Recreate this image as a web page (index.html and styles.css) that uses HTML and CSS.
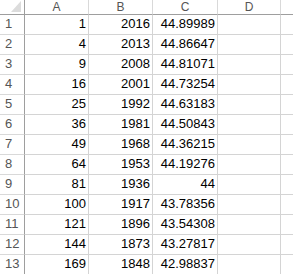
FILE: index.html
```
<!DOCTYPE html>
<html>
<head>
<meta charset="utf-8">
<link rel="stylesheet" href="styles.css">
</head>
<body>
<div class="sheet">
  <div class="corner"><span class="tri"></span></div>
  <div class="colh">A</div><div class="colh">B</div><div class="colh">C</div><div class="colh">D</div><div class="colh last"></div>

  <div class="rowh">1</div><div class="cell">1</div><div class="cell">2016</div><div class="cell">44.89989</div><div class="cell"></div><div class="cell last"></div>
  <div class="rowh">2</div><div class="cell">4</div><div class="cell">2013</div><div class="cell">44.86647</div><div class="cell"></div><div class="cell last"></div>
  <div class="rowh">3</div><div class="cell">9</div><div class="cell">2008</div><div class="cell">44.81071</div><div class="cell"></div><div class="cell last"></div>
  <div class="rowh">4</div><div class="cell">16</div><div class="cell">2001</div><div class="cell">44.73254</div><div class="cell"></div><div class="cell last"></div>
  <div class="rowh">5</div><div class="cell">25</div><div class="cell">1992</div><div class="cell">44.63183</div><div class="cell"></div><div class="cell last"></div>
  <div class="rowh">6</div><div class="cell">36</div><div class="cell">1981</div><div class="cell">44.50843</div><div class="cell"></div><div class="cell last"></div>
  <div class="rowh">7</div><div class="cell">49</div><div class="cell">1968</div><div class="cell">44.36215</div><div class="cell"></div><div class="cell last"></div>
  <div class="rowh">8</div><div class="cell">64</div><div class="cell">1953</div><div class="cell">44.19276</div><div class="cell"></div><div class="cell last"></div>
  <div class="rowh">9</div><div class="cell">81</div><div class="cell">1936</div><div class="cell">44</div><div class="cell"></div><div class="cell last"></div>
  <div class="rowh">10</div><div class="cell">100</div><div class="cell">1917</div><div class="cell">43.78356</div><div class="cell"></div><div class="cell last"></div>
  <div class="rowh">11</div><div class="cell">121</div><div class="cell">1896</div><div class="cell">43.54308</div><div class="cell"></div><div class="cell last"></div>
  <div class="rowh">12</div><div class="cell">144</div><div class="cell">1873</div><div class="cell">43.27817</div><div class="cell"></div><div class="cell last"></div>
  <div class="rowh">13</div><div class="cell">169</div><div class="cell">1848</div><div class="cell">42.98837</div><div class="cell"></div><div class="cell last"></div>
</div>
</body>
</html>
```
FILE: styles.css
```
html, body {
  margin: 0;
  padding: 0;
  background: #ffffff;
  overflow: hidden;
}
.sheet {
  display: grid;
  grid-template-columns: 25px 64px 64px 65px 63px 12px;
  grid-template-rows: 15px repeat(13, 20px);
  font-family: "Liberation Sans", Arial, sans-serif;
  font-size: 13px;
  color: #000;
}
.corner {
  box-sizing: border-box;
  border-right: 1px solid #9e9e9e;
  border-bottom: 1px solid #9e9e9e;
  display: flex;
  justify-content: flex-end;
  align-items: flex-end;
  padding: 0 3px 2px 0;
}
.tri {
  width: 0;
  height: 0;
  border-left: 10px solid transparent;
  border-bottom: 11px solid #dcdcdc;
}
.colh {
  box-sizing: border-box;
  border-right: 1px solid #d9d9d9;
  border-bottom: 1px solid #9e9e9e;
  display: flex;
  justify-content: center;
  align-items: center;
  color: #555;
  font-size: 12px;
  line-height: 14px;
}
.rowh {
  box-sizing: border-box;
  border-right: 1px solid #9e9e9e;
  border-bottom: 1px solid #d9d9d9;
  display: flex;
  align-items: flex-end;
  padding: 0 0 3px 5px;
  color: #555;
  line-height: 14px;
}
.cell {
  box-sizing: border-box;
  border-right: 1px solid #d4d4d4;
  border-bottom: 1px solid #d4d4d4;
  display: flex;
  justify-content: flex-end;
  align-items: flex-end;
  padding: 0 2px 3px 0;
  line-height: 14px;
}
.last {
  border-right: none;
}
```
